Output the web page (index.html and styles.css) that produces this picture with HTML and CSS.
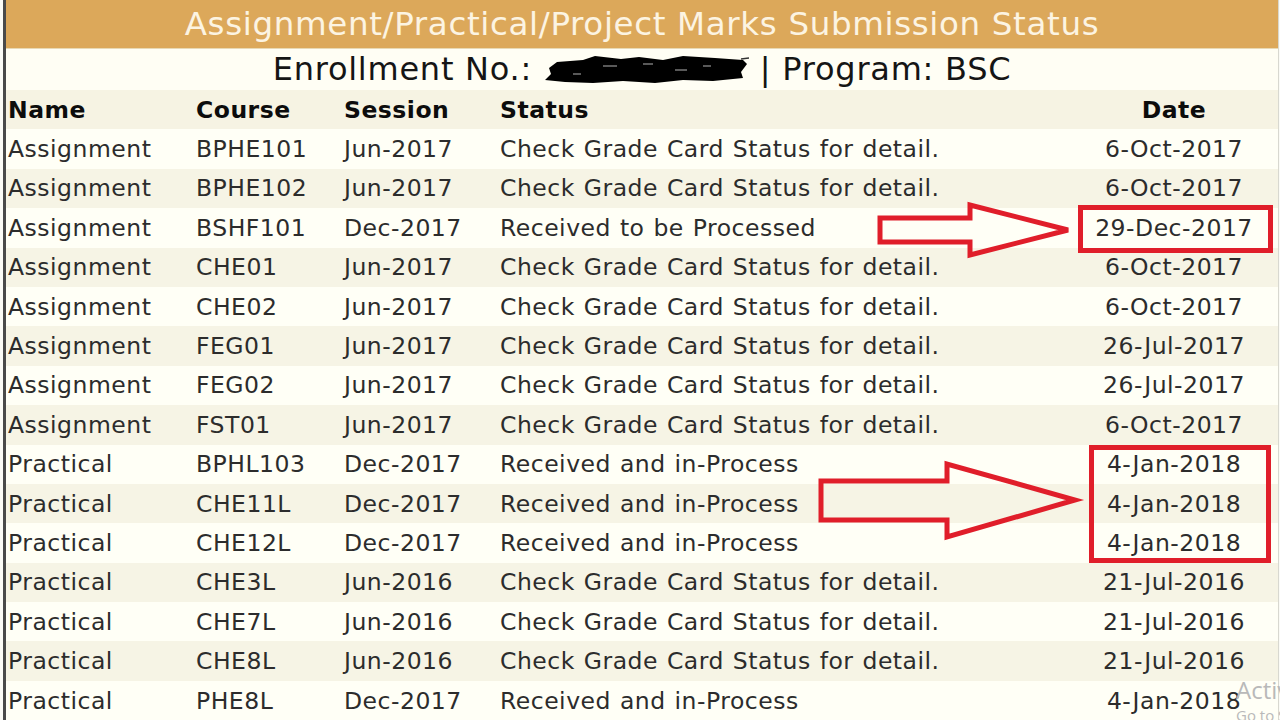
FILE: index.html
```html
<!DOCTYPE html>
<html>
<head>
<meta charset="utf-8">
<link rel="stylesheet" href="styles.css">
</head>
<body>
<div class="page">
  <div class="frame">
    <div class="title">Assignment/Practical/Project Marks Submission Status</div>
    <div class="enroll">Enrollment No.: <svg class="blot" width="206" height="30" viewBox="0 0 206 30"><path d="M2 26 L8 20 L6 14 L14 8 L40 6 L52 2 L78 5 L96 3 L120 6 L140 2 L172 4 L200 6 L204 10 L198 18 L200 24 L170 27 L140 26 L112 29 L80 27 L50 29 L22 28 Z" fill="#000"/><path d="M60 12 h14 M100 10 h10 M132 16 h12 M30 20 h8 M160 12 h8" stroke="#777" stroke-width="1.5"/><path d="M198 5 L206 4" stroke="#333" stroke-width="1.5"/></svg> | Program: BSC</div>
    <table class="marks">
      <colgroup>
        <col class="c-name"><col class="c-course"><col class="c-session"><col class="c-status"><col class="c-date">
      </colgroup>
      <thead>
        <tr><th>Name</th><th>Course</th><th>Session</th><th>Status</th><th class="date">Date</th></tr>
      </thead>
      <tbody>
        <tr><td>Assignment</td><td>BPHE101</td><td>Jun-2017</td><td>Check Grade Card Status for detail.</td><td class="date">6-Oct-2017</td></tr>
        <tr><td>Assignment</td><td>BPHE102</td><td>Jun-2017</td><td>Check Grade Card Status for detail.</td><td class="date">6-Oct-2017</td></tr>
        <tr><td>Assignment</td><td>BSHF101</td><td>Dec-2017</td><td>Received to be Processed</td><td class="date">29-Dec-2017</td></tr>
        <tr><td>Assignment</td><td>CHE01</td><td>Jun-2017</td><td>Check Grade Card Status for detail.</td><td class="date">6-Oct-2017</td></tr>
        <tr><td>Assignment</td><td>CHE02</td><td>Jun-2017</td><td>Check Grade Card Status for detail.</td><td class="date">6-Oct-2017</td></tr>
        <tr><td>Assignment</td><td>FEG01</td><td>Jun-2017</td><td>Check Grade Card Status for detail.</td><td class="date">26-Jul-2017</td></tr>
        <tr><td>Assignment</td><td>FEG02</td><td>Jun-2017</td><td>Check Grade Card Status for detail.</td><td class="date">26-Jul-2017</td></tr>
        <tr><td>Assignment</td><td>FST01</td><td>Jun-2017</td><td>Check Grade Card Status for detail.</td><td class="date">6-Oct-2017</td></tr>
        <tr><td>Practical</td><td>BPHL103</td><td>Dec-2017</td><td>Received and in-Process</td><td class="date">4-Jan-2018</td></tr>
        <tr><td>Practical</td><td>CHE11L</td><td>Dec-2017</td><td>Received and in-Process</td><td class="date">4-Jan-2018</td></tr>
        <tr><td>Practical</td><td>CHE12L</td><td>Dec-2017</td><td>Received and in-Process</td><td class="date">4-Jan-2018</td></tr>
        <tr><td>Practical</td><td>CHE3L</td><td>Jun-2016</td><td>Check Grade Card Status for detail.</td><td class="date">21-Jul-2016</td></tr>
        <tr><td>Practical</td><td>CHE7L</td><td>Jun-2016</td><td>Check Grade Card Status for detail.</td><td class="date">21-Jul-2016</td></tr>
        <tr><td>Practical</td><td>CHE8L</td><td>Jun-2016</td><td>Check Grade Card Status for detail.</td><td class="date">21-Jul-2016</td></tr>
        <tr><td>Practical</td><td>PHE8L</td><td>Dec-2017</td><td>Received and in-Process</td><td class="date">4-Jan-2018</td></tr>
      </tbody>
    </table>
  </div>
</div>
<svg class="marks-overlay" width="1280" height="720" viewBox="0 0 1280 720">
  <polygon points="880,218 970,218 970,205 1068,230 970,255 970,242 880,242" fill="none" stroke="#e01e2a" stroke-width="5" stroke-linejoin="miter"/>
  <rect x="1080.5" y="207.5" width="190" height="43" fill="none" stroke="#e01e2a" stroke-width="5"/>
  <polygon points="821,481 947,481 947,464 1075,500 947,537 947,520 821,520" fill="none" stroke="#e01e2a" stroke-width="5" stroke-linejoin="miter"/>
  <rect x="1091.5" y="447.5" width="177" height="113" fill="none" stroke="#e01e2a" stroke-width="5"/>
</svg>
<div class="watermark">
  <div class="wm-1">Activate Windows</div>
  <div class="wm-2">Go to Settings to activate Windows.</div>
</div>
</body>
</html>
```

FILE: styles.css
```css
html, body {
  margin: 0;
  padding: 0;
  width: 1280px;
  height: 720px;
  overflow: hidden;
  background: #ffffff;
}

.page {
  padding-left: 3px;
  height: 720px;
  background: #fbfbf6;
}

.frame {
  width: 1272px;
  height: 720px;
  border-left: 3px solid #4a4a4a;
  border-right: 1px solid #d8d8d0;
  font-family: "DejaVu Sans", Verdana, sans-serif;
  background: #fffff6;
}

.title {
  height: 48px;
  line-height: 48px;
  background: #dca85a;
  color: #fcf4e2;
  font-size: 32.5px;
  letter-spacing: 0.65px;
  text-align: center;
  border-bottom: 1px solid #e9d9b4;
}

.enroll {
  height: 41px;
  line-height: 41px;
  background: #fffef4;
  color: #151515;
  font-size: 32px;
  letter-spacing: 0.75px;
  text-align: center;
  white-space: nowrap;
}

.blot {
  vertical-align: -4px;
}

.marks {
  width: 1272px;
  table-layout: fixed;
  border-collapse: collapse;
  border-spacing: 0;
}

.c-name { width: 188px; }
.c-course { width: 148px; }
.c-session { width: 156px; }
.c-status { width: 572px; }
.c-date { width: 208px; }

.marks th,
.marks td {
  padding: 0 0 0 2px;
  text-align: left;
  white-space: nowrap;
  height: 39.4px;
  font-size: 23.5px;
  letter-spacing: 0.5px;
  word-spacing: 1px;
}

.marks th {
  font-weight: bold;
  color: #0c0c0c;
  background: #f6f3e3;
}

.marks td {
  color: #2c2c2c;
}

.marks tbody tr:nth-child(odd) td {
  background: #fffff6;
}

.marks tbody tr:nth-child(even) td {
  background: #f6f4e5;
}

.marks .date {
  text-align: center;
  padding: 0;
}

.marks-overlay {
  position: absolute;
  left: 0;
  top: 0;
  pointer-events: none;
}

.watermark {
  position: absolute;
  left: 1236px;
  top: 674px;
  white-space: nowrap;
  color: #b9b9b9;
  font-family: "Open Sans", sans-serif;
}

.wm-1 {
  font-size: 24px;
  line-height: 32px;
}

.wm-2 {
  font-size: 15px;
  line-height: 18px;
}
```
